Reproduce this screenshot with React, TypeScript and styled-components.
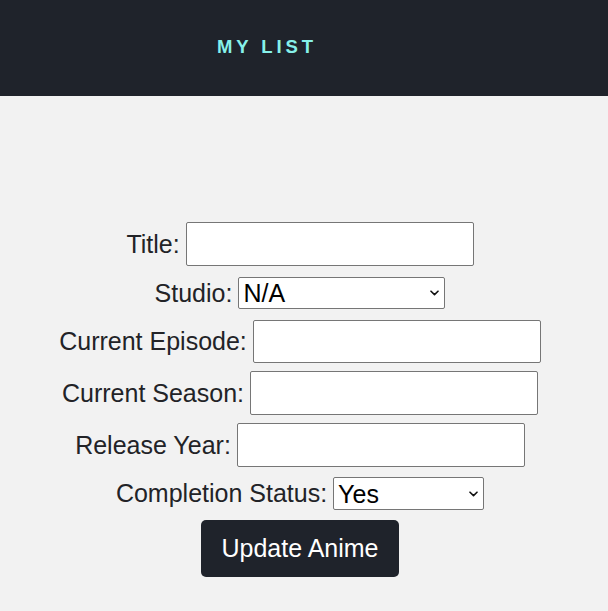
import React from "react";
import styled, { createGlobalStyle } from "styled-components";

const GlobalStyle = createGlobalStyle`
  html, body { margin: 0; padding: 0; background: #f2f2f2; }
  body { font-family: "Liberation Sans", Arial, Helvetica, sans-serif; }
`;

const Page = styled.div`
  min-height: 611px;
  background: #f2f2f2;
`;

const Header = styled.header`
  height: 96px;
  background: #1f232b;
  display: flex;
  align-items: center;
  padding-left: 217px;
  box-sizing: border-box;
`;

const Brand = styled.h1`
  margin: 0;
  font-size: 18.5px;
  font-weight: 700;
  letter-spacing: 3.9px;
  color: #86f1ea;
  line-height: 1;
  padding-bottom: 2px;
`;

const Form = styled.form`
  width: 600px;
  display: flex;
  flex-direction: column;
  align-items: center;
  padding-top: 126px;
`;

const Row = styled.div<{ $mt: number }>`
  display: flex;
  align-items: center;
  justify-content: center;
  gap: 6px;
  margin-top: ${(p) => p.$mt}px;
`;

const Label = styled.label`
  font-size: 25px;
  color: #222327;
  white-space: nowrap;
`;

const TextInput = styled.input<{ $h: number }>`
  box-sizing: border-box;
  width: 288px;
  height: ${(p) => p.$h}px;
  background: #fff;
  border: 1px solid #767676;
  border-radius: 2px;
  font-size: 24px;
  font-family: inherit;
  padding: 2px 6px;
`;

const SelectField = styled.div`
  position: relative;
  display: flex;
`;

const Select = styled.select<{ $w: number; $h: number }>`
  appearance: none;
  box-sizing: border-box;
  width: ${(p) => p.$w}px;
  height: ${(p) => p.$h}px;
  background: #fff;
  border: 1px solid #767676;
  border-radius: 2px;
  font-size: 25px;
  font-family: inherit;
  color: #000;
  padding: 0 24px 0 4px;
`;

const Chevron = styled.svg`
  position: absolute;
  right: 6px;
  top: 50%;
  width: 9px;
  height: 6px;
  margin-top: -3px;
  pointer-events: none;
`;

const Button = styled.button`
  margin-top: 10px;
  width: 198px;
  height: 57px;
  background: #1f232b;
  color: #fff;
  border: none;
  border-radius: 5px;
  font-size: 25px;
  font-family: inherit;
  cursor: pointer;
`;

const Arrow = () => (
  <Chevron viewBox="0 0 9 6">
    <path d="M1 1.2 L4.5 4.6 L8 1.2" fill="none" stroke="#111" strokeWidth="1.6" strokeLinecap="round" strokeLinejoin="round" />
  </Chevron>
);

export default function App() {
  return (
    <Page>
      <GlobalStyle />
      <Header>
        <Brand>MY LIST</Brand>
      </Header>
      <Form onSubmit={(e) => e.preventDefault()}>
        <Row $mt={0}>
          <Label htmlFor="title">Title:</Label>
          <TextInput id="title" $h={44} />
        </Row>
        <Row $mt={11}>
          <Label htmlFor="studio">Studio:</Label>
          <SelectField>
            <Select id="studio" $w={207} $h={32} defaultValue="N/A">
              <option>N/A</option>
            </Select>
            <Arrow />
          </SelectField>
        </Row>
        <Row $mt={11}>
          <Label htmlFor="ep">Current Episode:</Label>
          <TextInput id="ep" $h={43} />
        </Row>
        <Row $mt={8}>
          <Label htmlFor="season">Current Season:</Label>
          <TextInput id="season" $h={44} />
        </Row>
        <Row $mt={8}>
          <Label htmlFor="year">Release Year:</Label>
          <TextInput id="year" $h={44} />
        </Row>
        <Row $mt={10}>
          <Label htmlFor="status">Completion Status:</Label>
          <SelectField>
            <Select id="status" $w={151} $h={33} defaultValue="Yes">
              <option>Yes</option>
              <option>No</option>
            </Select>
            <Arrow />
          </SelectField>
        </Row>
        <Button type="submit">Update Anime</Button>
      </Form>
    </Page>
  );
}
